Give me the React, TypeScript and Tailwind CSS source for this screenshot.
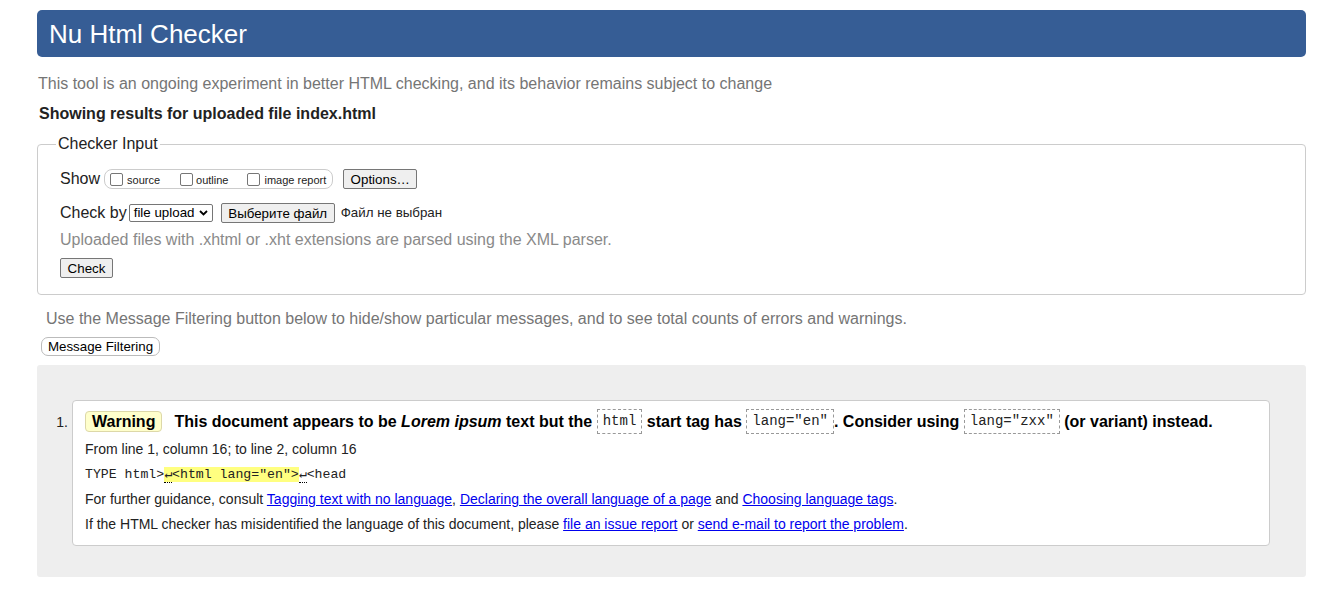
import React from 'react';

const Box = () => (
    <span className="inline-block w-[13px] h-[13px] border border-[#767676] rounded-[2px] bg-white" />
);

const Code = ({ children }: { children: React.ReactNode }) => (
    <code className="inline-block align-middle border border-dashed border-[#999] px-[5px] h-[25px] leading-[23px] font-['Liberation_Mono',monospace] font-normal text-[14px] text-[#222]">
        {children}
    </code>
);

const Lnk = ({ children }: { children: React.ReactNode }) => (
    <a href="#" className="text-[#0000ee] underline">
        {children}
    </a>
);

const App: React.FC = () => {
    return (
        <div className="font-['Liberation_Sans',Arial,sans-serif] bg-white min-h-[599px] pt-[10px] pl-[37px]">
            <div className="w-[1269px]">
                <header className="h-[47px] rounded-[5px] bg-[#365d95] pl-3 flex items-center">
                    <h1 className="text-[26px] text-white leading-none">Nu Html Checker</h1>
                </header>

                <p className="mt-[17px] text-[16px] leading-[20px] text-[#757575] pl-px">
                    This tool is an ongoing experiment in better HTML checking, and its behavior remains subject to change
                </p>
                <p className="mt-[10px] text-[16px] leading-[20px] font-bold text-[#222] pl-[2px]">
                    Showing results for uploaded file index.html
                </p>

                <fieldset className="mt-[10px] border border-[#ccc] rounded-[4px] pl-[22px] pt-[14px] pb-[14px]">
                    <legend className="ml-[-4px] px-[2px] text-[16px] leading-[20px] text-[#222]">Checker Input</legend>

                    <div className="flex items-center h-[22px]">
                        <span className="text-[16px] text-[#222]">Show</span>
                        <div className="ml-[4px] h-[20px] border border-[#ccc] rounded-[8px] flex items-center pl-[5px] pr-[6px] text-[11px] text-[#222]">
                            <label className="flex items-center gap-[4px]">
                                <Box />
                                <span className="mt-[3px]">source</span>
                            </label>
                            <label className="flex items-center gap-[3px] ml-[20px]">
                                <Box />
                                <span className="mt-[3px]">outline</span>
                            </label>
                            <label className="flex items-center gap-[4px] ml-[19px]">
                                <Box />
                                <span className="mt-[3px]">image report</span>
                            </label>
                        </div>
                        <button className="ml-[10px] h-[20px] w-[74px] bg-[#efefef] border border-[#767676] rounded-[2px] text-[13.33px] text-black">
                            Options…
                        </button>
                    </div>

                    <div className="flex items-center h-[20px] mt-[13px]">
                        <span className="text-[16px] text-[#222]">Check by</span>
                        <div className="ml-[2px] h-[18px] w-[84px] border border-[#767676] rounded-[2px] bg-white flex items-center justify-between pl-[4px] pr-[4px] text-[13.33px] text-black">
                            <span>file upload</span>
                            <svg width="9" height="6" viewBox="0 0 9 6">
                                <path d="M1 1l3.5 3.5L8 1" fill="none" stroke="#000" strokeWidth="1.8" />
                            </svg>
                        </div>
                        <button className="ml-[8px] h-[20px] w-[114px] bg-[#efefef] border border-[#767676] rounded-[2px] text-[13.33px] text-black">
                            Выберите файл
                        </button>
                        <span className="ml-[6px] text-[13.33px] text-[#222]">Файл не выбран</span>
                    </div>

                    <p className="mt-[7px] text-[16px] leading-[20px] text-[#8a8a8a]">
                        Uploaded files with .xhtml or .xht extensions are parsed using the XML parser.
                    </p>
                    <button className="mt-[8px] h-[20px] w-[53px] bg-[#efefef] border border-[#767676] rounded-[2px] text-[13.33px] text-black">
                        Check
                    </button>
                </fieldset>

                <p className="mt-[14px] ml-[9px] text-[16px] leading-[20px] text-[#757575]">
                    Use the Message Filtering button below to hide/show particular messages, and to see total counts of errors and warnings.
                </p>
                <button className="mt-[8px] ml-[4px] h-[19px] w-[119px] bg-white border border-[#bbb] rounded-[7px] text-[13.33px] leading-none text-black">
                    Message Filtering
                </button>

                <section className="mt-[7px] h-[212px] bg-[#eeeeee] rounded-[3px] pt-[35px] pl-[35px] pr-[36px]">
                    <ol className="flex">
                        <li className="flex w-full">
                            <span className="w-[0px] relative">
                                <span className="absolute right-[4px] top-[12px] text-[14px] text-[#222]">1.</span>
                            </span>
                            <div className="flex-1 bg-white border border-[#ccc] rounded-[4px] pt-[7px] pl-[12px] pb-[8px] text-[14px] text-[#222]">
                                <p className="leading-[25px] h-[25px] text-[16px] font-bold text-black whitespace-nowrap">
                                    <span className="inline-block align-middle h-[21px] leading-[19px] px-[6px] bg-[#ffffcc] border border-[#ddd8a8] rounded-[4px] mr-[12px]">
                                        Warning
                                    </span>
                                    <span className="align-middle">
                                        This document appears to be <em>Lorem ipsum</em> text but the{' '}
                                    </span>
                                    <Code>html</Code>
                                    <span className="align-middle"> start tag has </span>
                                    <Code>lang="en"</Code>
                                    <span className="align-middle">. Consider using </span>
                                    <Code>lang="zxx"</Code>
                                    <span className="align-middle"> (or variant) instead.</span>
                                </p>
                                <p className="mt-[4px] leading-[25px]">From line 1, column 16; to line 2, column 16</p>
                                <p className="leading-[25px] font-['Liberation_Mono',monospace] text-[13.2px] whitespace-pre">
                                    TYPE html&gt;
                                    <span className="bg-[#ffff80]">
                                        <span className="border-b border-dotted border-[#000]">↵</span>&lt;html lang="en"&gt;
                                    </span>
                                    <span className="border-b border-dotted border-[#000]">↵</span>&lt;head
                                </p>
                                <p className="leading-[25px]">
                                    For further guidance, consult <Lnk>Tagging text with no language</Lnk>,{' '}
                                    <Lnk>Declaring the overall language of a page</Lnk> and <Lnk>Choosing language tags</Lnk>.
                                </p>
                                <p className="leading-[25px]">
                                    If the HTML checker has misidentified the language of this document, please{' '}
                                    <Lnk>file an issue report</Lnk> or <Lnk>send e-mail to report the problem</Lnk>.
                                </p>
                            </div>
                        </li>
                    </ol>
                </section>
            </div>
        </div>
    );
};

export default App;
